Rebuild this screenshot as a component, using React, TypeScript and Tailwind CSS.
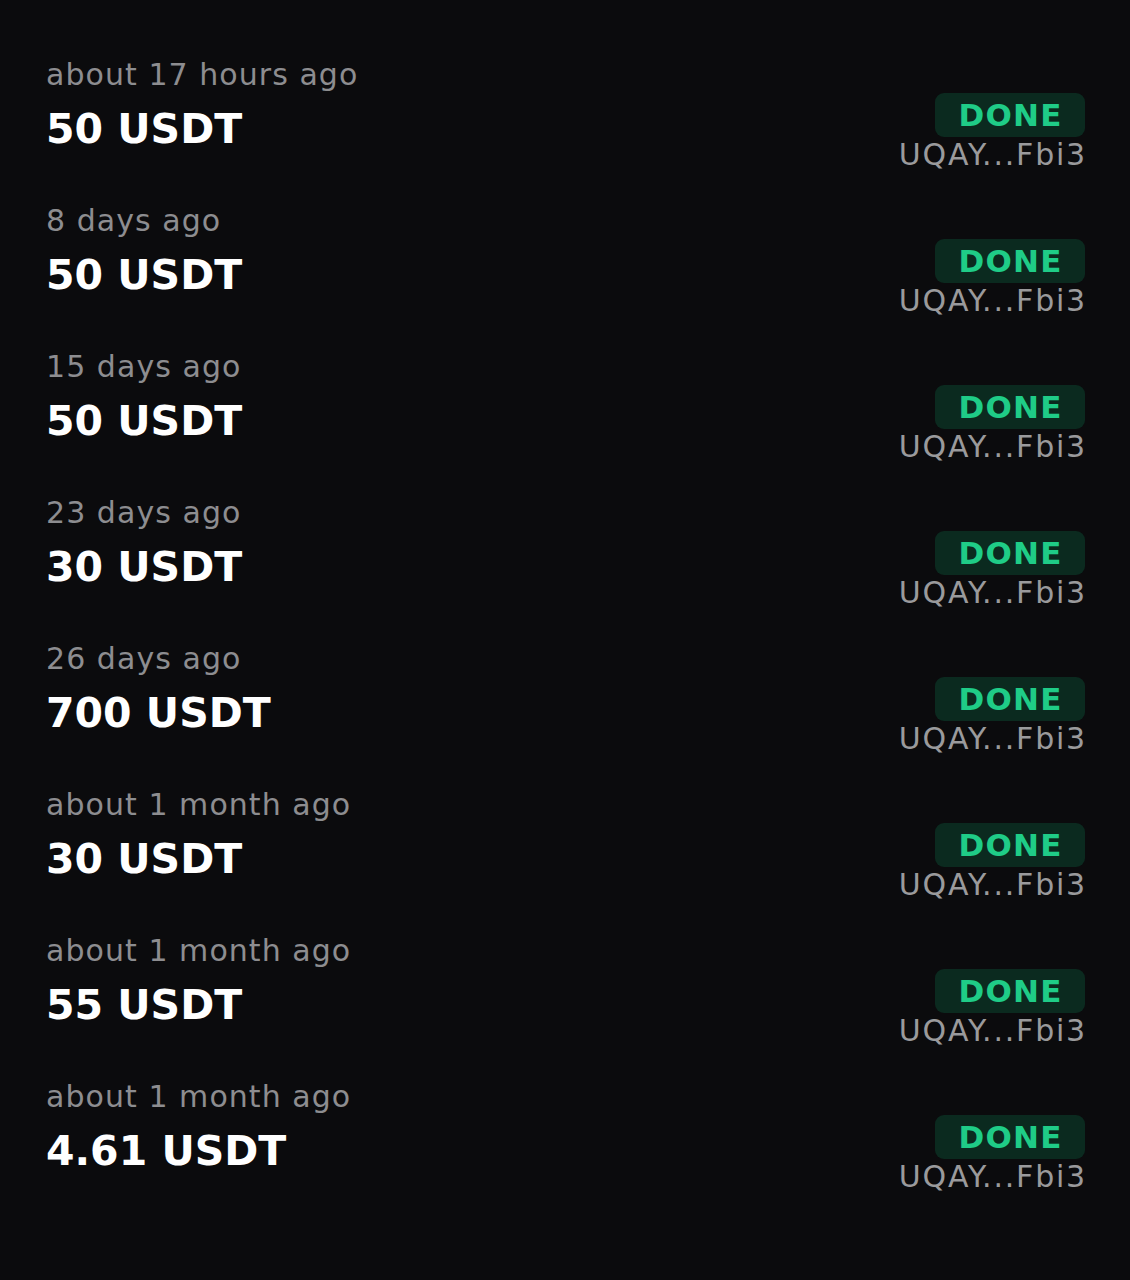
const rows = [
  { when: "about 17 hours ago", amount: "50 USDT" },
  { when: "8 days ago", amount: "50 USDT" },
  { when: "15 days ago", amount: "50 USDT" },
  { when: "23 days ago", amount: "30 USDT" },
  { when: "26 days ago", amount: "700 USDT" },
  { when: "about 1 month ago", amount: "30 USDT" },
  { when: "about 1 month ago", amount: "55 USDT" },
  { when: "about 1 month ago", amount: "4.61 USDT" },
];

export default function App() {
  return (
    <div
      className="min-h-[1280px] w-full bg-[#0b0b0d] pl-[46px] pr-[45px] pt-[40px]"
      style={{ fontFamily: "'DejaVu Sans', Inter, sans-serif" }}
    >
      {rows.map((r, i) => (
        <div key={i} className="flex justify-between py-[13px]">
          <div className="flex flex-col">
            <span className="text-[30px] leading-[44px] tracking-[0.035em] text-[#8d8d90]">{r.when}</span>
            <span className="text-[41px] leading-[64px] font-bold text-white">{r.amount}</span>
          </div>
          <div className="mt-[40px] flex flex-col items-end">
            <span className="flex h-[44px] w-[150px] items-center justify-center rounded-[9px] bg-[#0b2a1f] text-[31px] font-bold tracking-[0.04em] text-[#1fcc87]">
              <span className="ml-[1px]">DONE</span>
            </span>
            <span className="mr-[-2px] text-[30px] leading-[36px] tracking-[0.06em] text-[#9a9a9c]">UQAY...Fbi3</span>
          </div>
        </div>
      ))}
    </div>
  );
}
